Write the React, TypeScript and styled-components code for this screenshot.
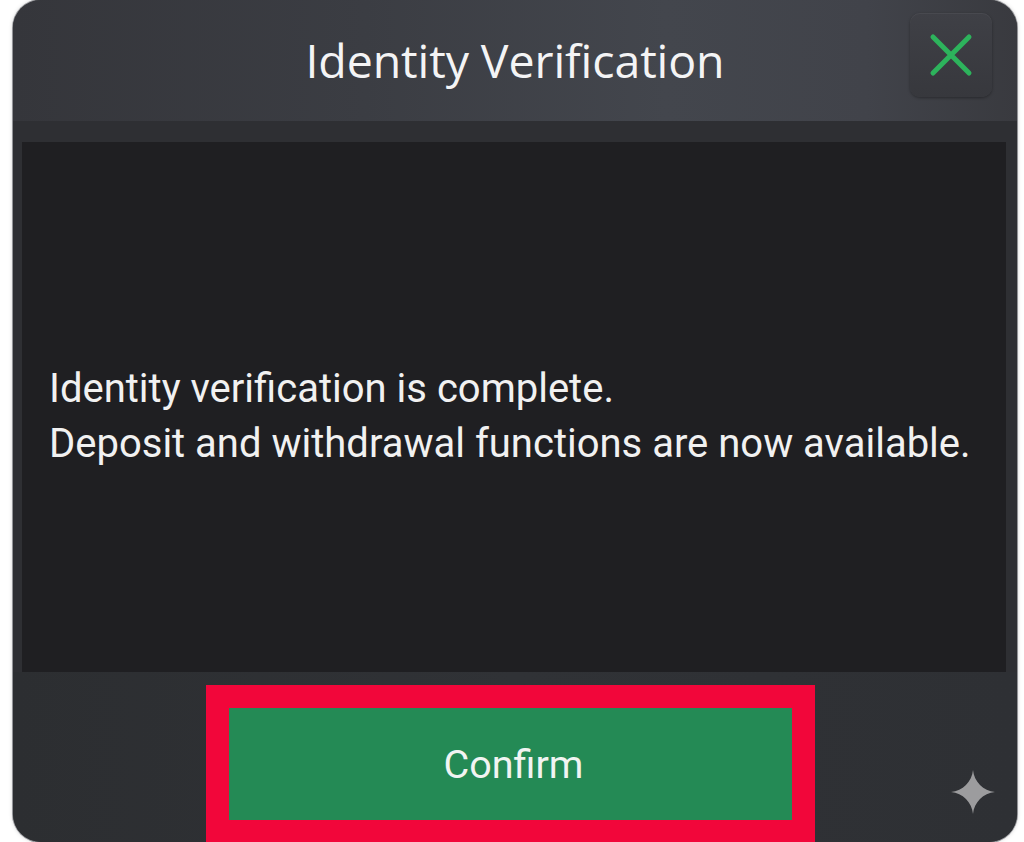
import React from "react";
import styled, { createGlobalStyle } from "styled-components";

const Global = createGlobalStyle`
  html, body { margin: 0; padding: 0; background: #ffffff; }
  body { width: 1024px; height: 842px; overflow: hidden; }
`;

const Page = styled.div`
  width: 1024px;
  height: 842px;
  padding: 0 7px 0 13px;
  box-sizing: border-box;
`;

const Panel = styled.div`
  width: 1004px;
  height: 842px;
  border-radius: 28px;
  overflow: hidden;
  display: flex;
  flex-direction: column;
  background: #2f3034;
  box-shadow: 0 0 0 1px rgba(90, 92, 98, 0.6), 0 0 4px rgba(0, 0, 0, 0.25);
`;

const Header = styled.header`
  height: 121px;
  flex: none;
  display: grid;
  grid-template-columns: 1fr auto 1fr;
  background: linear-gradient(90deg, #35363b 0%, #3b3d43 35%, #43464d 65%, #41434a 85%, #393a3f 100%);
`;

const Title = styled.h1`
  grid-column: 2;
  margin: 0;
  align-self: center;
  padding: 0 0 1px 0;
  font-family: "Open Sans", "Noto Sans", sans-serif;
  font-weight: 400;
  font-size: 46.5px;
  letter-spacing: -0.1px;
  color: #f4f4f5;
`;

const CloseButton = styled.button`
  grid-column: 3;
  justify-self: end;
  align-self: start;
  margin: 13px 25px 0 0;
  width: 82px;
  height: 84px;
  border: none;
  border-radius: 10px;
  background: linear-gradient(180deg, #3f4046 0%, #37383d 100%);
  box-shadow: 0 1px 3px rgba(0, 0, 0, 0.35), inset 0 1px 0 rgba(255, 255, 255, 0.05);
  display: flex;
  align-items: center;
  justify-content: center;
  padding: 0;
  cursor: pointer;
`;

const Body = styled.div`
  flex: none;
  padding: 21px 11px 0 9px;
  background: #2e2f33;
`;

const Message = styled.div`
  height: 530px;
  box-sizing: border-box;
  background: #1f1f22;
  display: flex;
  flex-direction: column;
  justify-content: center;
  padding: 18px 0 0 27px;
`;

const Line = styled.p`
  margin: 0;
  font-family: Roboto, "Liberation Sans", sans-serif;
  font-size: 40px;
  line-height: 55px;
  color: #f1f1f1;
`;

const Footer = styled.footer`
  flex: 1;
  position: relative;
  padding: 13px 0 0 193px;
  background: linear-gradient(90deg, #2c2e31 0%, #303236 50%, #2e3034 100%);
`;

const Highlight = styled.div`
  width: 609px;
  box-sizing: border-box;
  padding: 23px;
  background: #f2063a;
`;

const ConfirmButton = styled.button`
  width: 563px;
  height: 112px;
  border: none;
  background: #248a55;
  color: #f1f4f2;
  font-family: Roboto, "Liberation Sans", sans-serif;
  font-size: 39.5px;
  padding: 0 0 0 6px;
  display: block;
  cursor: pointer;
`;

const Sparkle = styled.svg`
  position: absolute;
  right: 22px;
  bottom: 29px;
  width: 44px;
  height: 44px;
`;

export default function App() {
  return (
    <Page>
      <Global />
      <Panel>
        <Header>
          <Title>Identity Verification</Title>
          <CloseButton aria-label="Close">
            <svg width="44" height="44" viewBox="0 0 44 44">
              <path
                d="M4 4 L40 40 M40 4 L4 40"
                stroke="#2db35c"
                strokeWidth="5"
                strokeLinecap="round"
                fill="none"
              />
            </svg>
          </CloseButton>
        </Header>
        <Body>
          <Message>
            <Line>Identity verification is complete.</Line>
            <Line>Deposit and withdrawal functions are now available.</Line>
          </Message>
        </Body>
        <Footer>
          <Highlight>
            <ConfirmButton>Confirm</ConfirmButton>
          </Highlight>
          <Sparkle viewBox="0 0 24 24">
            <path
              d="M12 0 C12.6 6.4 17.6 11.4 24 12 C17.6 12.6 12.6 17.6 12 24 C11.4 17.6 6.4 12.6 0 12 C6.4 11.4 11.4 6.4 12 0 Z"
              fill="#9c9c9e"
            />
          </Sparkle>
        </Footer>
      </Panel>
    </Page>
  );
}
